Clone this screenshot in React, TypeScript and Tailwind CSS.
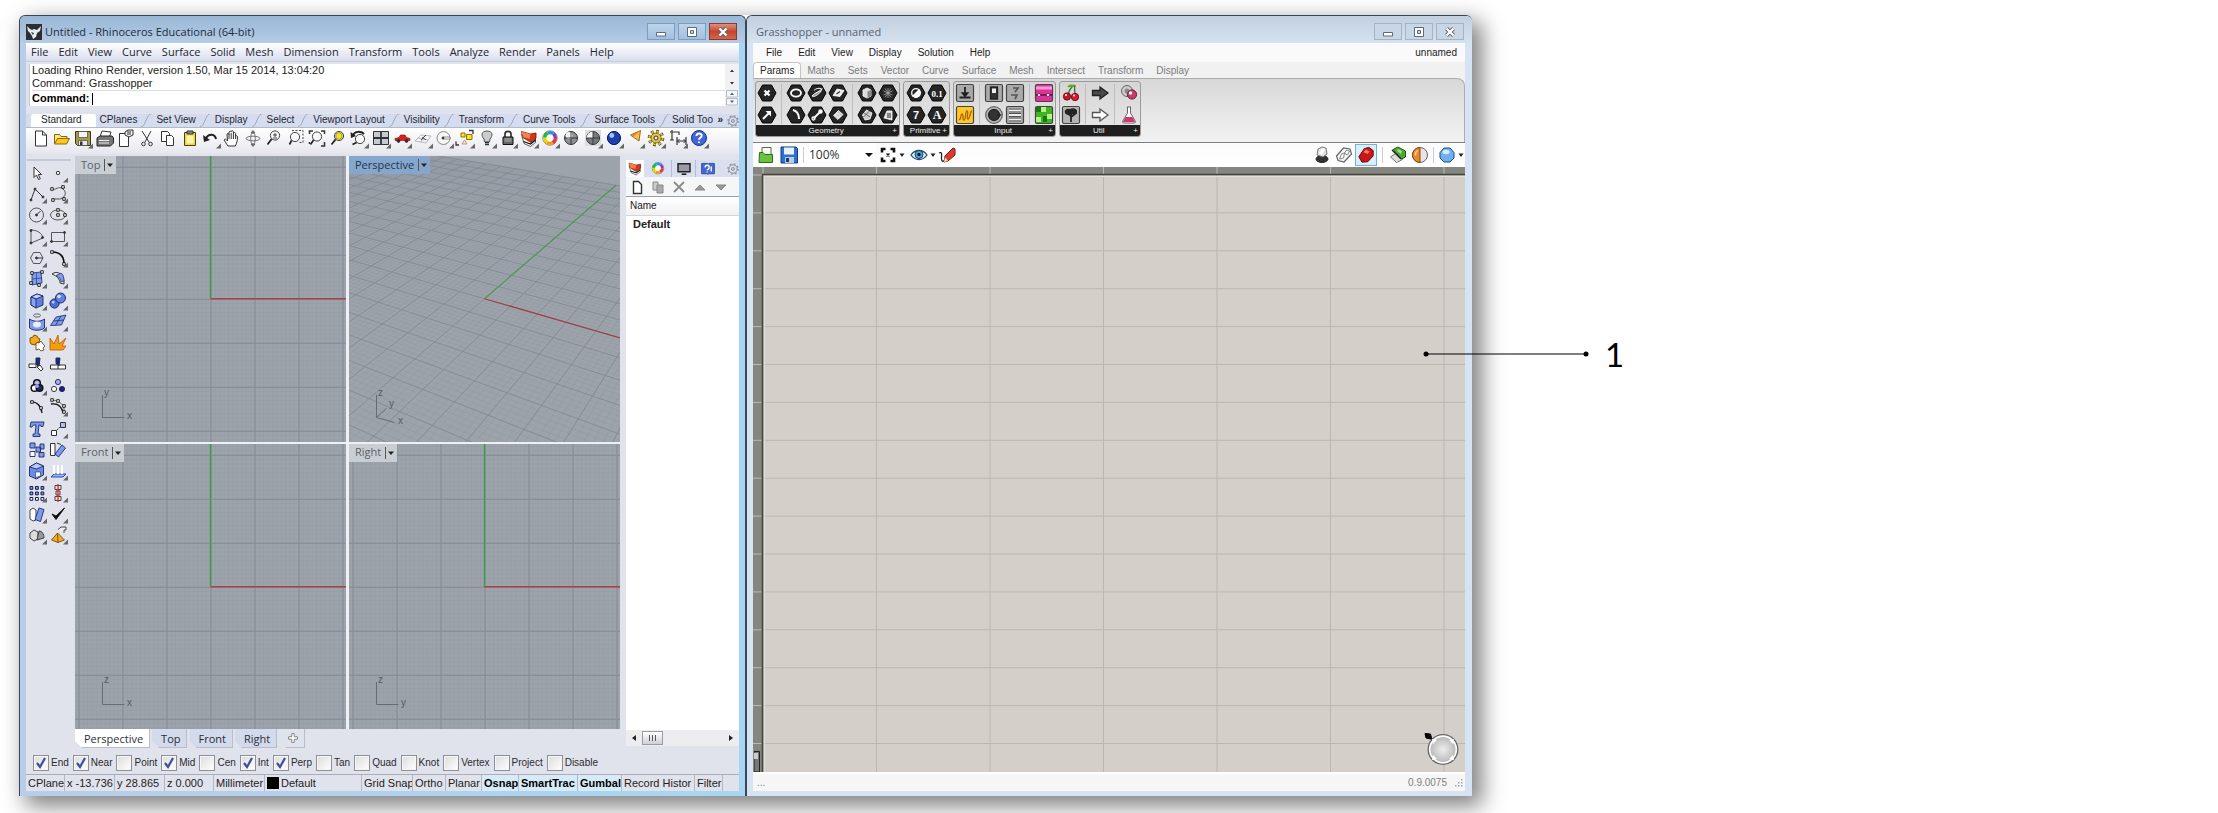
import React, { ReactNode } from "react";

const UI = "font-['Open_Sans','Noto_Sans',sans-serif]";
const ARIAL = "font-['Liberation_Sans',Arial,sans-serif]";

/* ---------- shared icon pieces ---------- */

function Glyph({ children, fly, label }: { children: ReactNode; fly?: boolean; label: string }) {
  return (
    <button type="button" aria-label={label} className="flex size-5 shrink-0 items-center justify-center">
      <svg viewBox="0 0 20 20" className="size-5 overflow-visible" fill="none" stroke="#333" strokeWidth="1">
        {children}
        {fly && <path d="M20 14.500v5h-5z" fill="#666" stroke="none" />}
      </svg>
    </button>
  );
}

const WHEEL = ["#e33", "#f90", "#dd0", "#2b3", "#29d", "#83c"];
function Wheel({ r = 5.3 }: { r?: number }) {
  const seg = (2 * Math.PI * r) / 6;
  return (
    <g>
      <circle cx="10" cy="9" r={r + 1.9} stroke="#555" strokeWidth="0.7" fill="#fff" />
      {WHEEL.map((c, i) => (
        <circle key={c} cx="10" cy="9" r={r} stroke={c} strokeWidth="3.2" strokeDasharray={`${seg} ${seg * 5}`} strokeDashoffset={-seg * i} />
      ))}
    </g>
  );
}

function Layers() {
  return (
    <g strokeWidth="0.8">
      <path d="M2.500 5.500l2.500 9 6.500 3 5-4V6l-5 5z" fill="#fff" stroke="#333" />
      <path d="M2.500 2.500l9 2.500 5.500-1v5l-5 4.500-8-5z" fill="#d93418" stroke="#6b1408" />
      <path d="M2.500 2.500l9 2.500-1 5-6.500-2z" fill="#f5804a" stroke="none" />
      <path d="M4.500 12.500l7 2.500 5-4" stroke="#111" strokeWidth="1.300" />
    </g>
  );
}

function Gear({ stroke = "#8a8d95" }: { stroke?: string }) {
  return (
    <svg viewBox="0 0 20 20" className="size-3 shrink-0" fill="none" stroke={stroke} strokeWidth="1.6">
      <circle cx="10" cy="10" r="7" />
      <circle cx="10" cy="10" r="8.6" strokeWidth="2" strokeDasharray="3 3.75" />
      <circle cx="10" cy="10" r="2.4" />
    </svg>
  );
}

/* ---------- standard toolbar ---------- */

const lens = (x: number, y: number, fill = "#f8f8f8") => (
  <g>
    <circle cx={x} cy={y} r="4.6" fill={fill} stroke="#444" />
    <path d={`M${x - 3.4} ${y + 3.4}L3.5 15.5`} stroke="#222" strokeWidth="1.7" />
  </g>
);

const toolbar: [string, boolean, ReactNode][] = [
  ["New", false, <path d="M4.500 2h7l4 4v11h-11zM11.500 2v4h4" fill="#fff" />],
  ["Open", false, <g><path d="M2.500 14.500v-9h5l1.500 2h6v3" fill="#ffe680" stroke="#8a6a00" /><path d="M2.500 15l3-5.500h12L14.500 15z" fill="#ffc61a" stroke="#8a6a00" /></g>],
  ["Save", true, <g><path d="M2.500 2.500h15v14h-13l-2-2z" fill="#a79a48" stroke="#3a3617" /><path d="M5.500 2.500h9v6h-9z" fill="#f3f4f8" strokeWidth=".6" /><path d="M5.500 11.500h9v5h-9z" fill="#e9e9ee" strokeWidth=".6" /><path d="M7 12.500h2.500v3.500H7z" fill="#333" stroke="none" /></g>],
  ["Print", false, <g><path d="M5 8l2-6 9 1-2 6z" fill="#fff" /><path d="M2 9l3-2h12l1.500 2v5l-3 3H2z" fill="#777" stroke="#222" /><path d="M4 11.500h10M4 14h10" stroke="#eee" /></g>],
  ["Properties", false, <g><path d="M3.500 4.500h9v13h-9z" fill="#fff" /><path d="M9 3l3-2h5v5l-4 2-4-2z" fill="#eee" /><path d="M11 3h4M11 5h4" /></g>],
  ["Cut", false, <g><path d="M5 2l7 11M14 2L8 13" /><circle cx="6.500" cy="15" r="1.800" /><circle cx="13.500" cy="15" r="1.800" /></g>],
  ["Copy", false, <g><path d="M3.500 2.500h6l2 2v8h-8z" fill="#fff" /><path d="M8.500 6.500h5l2 2v8h-7z" fill="#fff" /></g>],
  ["Paste", false, <g><path d="M4.500 3.500h11v13h-11z" fill="#e8d44d" stroke="#4b4310" /><path d="M7 2h6v3H7z" fill="#888" /><path d="M6.500 6.500h7v8h-7z" fill="#fff4a8" stroke="none" /></g>],
  ["Undo", true, <g><path d="M5 9c3-5 9-4 10 1" stroke="#222" strokeWidth="2" /><path d="M2 6l1 7 6-2z" fill="#222" stroke="none" /></g>],
  ["Pan", false, <path d="M6 17l-4-6c1-1.500 2-1 3.500 1L5 5c1-1 2-.500 2 1V3c.800-1.200 2-1 2.200 0v-.700c.800-1 2-.800 2.200.700V4c1-1 2-.500 2.200.500V7c1-.600 2-.200 2 1-.100 4-1 6-2.200 9zM7 6v4M9.200 4v6M11.400 4v6M13.600 6v4" fill="#fff" />],
  ["Rotate", false, <g stroke="#666" strokeWidth=".9"><ellipse cx="10" cy="9.500" rx="7" ry="2.300" /><ellipse cx="10" cy="9.500" rx="2.300" ry="6" /><path d="M8 4l2-2.500L12 4zM8 15l2 2.500 2-2.500z" fill="#666" /></g>],
  ["Zoom", false, <g>{lens(11, 6.5)}<path d="M9 6h4M11 4v4M9 9h4" strokeWidth=".9" /></g>],
  ["Zoom window", false, <g>{lens(9, 8)}<path d="M6 1.500h11v12h-4" strokeDasharray="2 1.500" strokeWidth=".9" /></g>],
  ["Zoom extents", false, <g>{lens(10, 7.5)}<path d="M2.500 5V2H6M14 2h3.500v3M17.500 13v4H14M2.500 13v2" strokeWidth="1.500" /></g>],
  ["Zoom selected", false, <g>{lens(11, 7, "#d9d9d9")}<circle cx="11" cy="7" r="3.200" fill="#f6e21c" stroke="#887a00" strokeWidth=".6" /></g>],
  ["Undo view", true, <g>{lens(11, 10)}<path d="M4 6c2-4 8-4 11-1" stroke="#222" strokeWidth="2" /><path d="M1.500 3l.500 6 5-2z" fill="#222" stroke="none" /></g>],
  ["Four views", true, <g><path d="M2.500 2.500h15v13h-15z" fill="#c5cad2" /><path d="M10 2.500v13M2.500 9h15" strokeWidth="1.800" /></g>],
  ["Set view", true, <g><path d="M3 9.500l4-1L8.500 6H13l1.500 2.500 3.500 1v2H3z" fill="#d91f1f" stroke="#7d0d0d" strokeWidth=".6" /><circle cx="6.500" cy="12" r="1.400" fill="#222" /><circle cx="14.500" cy="12" r="1.400" fill="#222" /></g>],
  ["CPlane", true, <g stroke="#aaa" strokeWidth=".8"><path d="M2 12l6-6 10 1-5 7zM5 9l10 2M8 13l4-7" /><path d="M8 11l5-5M9 8l4 3" stroke="#333" /></g>],
  ["Object snap", true, <g><circle cx="9.500" cy="9" r="6.500" stroke="#888" fill="#f6f6f6" /><path d="M9 8h7v2H9z" stroke="#666" strokeWidth=".7" fill="#fff" /><circle cx="9" cy="9" r="1" fill="#333" /></g>],
  ["Select", true, <g><path d="M6 4h4v4H6zM11.500 5.500H17v5h-5.500z" fill="#ffe02a" stroke="#8a7300" /><path d="M7 15l2.500-4 2.500 4z" fill="#ffe4c8" stroke="#b9835a" strokeWidth=".8" /><path d="M14 1.500h4V5M1 12.500V16h3" strokeWidth="1.300" /></g>],
  ["Hide", true, <g><path d="M10 2c6 0 6 5 3 8l-.500 3h-5L7 10C4 7 4 2 10 2z" fill="#c9cbd0" stroke="#555" /><path d="M8 13.500h4M8 15.500h4" strokeWidth="1.600" /></g>],
  ["Lock", true, <g><path d="M7 8V5c0-3.500 6-3.500 6 0v3" strokeWidth="1.700" /><path d="M5 8h10v7.500H5z" fill="#666" stroke="#111" /><path d="M6.500 10h7M6.500 12h7" stroke="#ccc" strokeWidth=".8" /></g>],
  ["Layers", true, <Layers />],
  ["Color", true, <Wheel />],
  ["Shade", false, <g><circle cx="10" cy="9" r="6.500" fill="#8d8f93" stroke="#333" /><circle cx="8" cy="6.500" r="3.400" fill="#f2f2f2" stroke="none" /><path d="M3.500 9h13M10 2.500v13" strokeWidth=".9" /></g>],
  ["Render shade", true, <g><path d="M2 1h16v16H2z" fill="#dcdcde" stroke="none" /><circle cx="10" cy="9" r="6.500" fill="#77797d" stroke="#333" /><path d="M10 2.500A6.500 6.500 0 0 0 3.500 9H10z" fill="#f2f2f2" stroke="none" /><path d="M3.500 9h13M10 2.500v13" strokeWidth=".9" /></g>],
  ["Render", true, <g><circle cx="10" cy="9" r="6.600" fill="#1c3fae" stroke="#0c1d5e" /><circle cx="7.800" cy="6.500" r="2.400" fill="#a9c4ff" stroke="none" /></g>],
  ["Spotlight", true, <g><path d="M5.500 6L15.500 1.500 14 12z" fill="#f6c04e" stroke="#7b4c07" strokeWidth=".8" /><path d="M5.500 6l10-4.500L9 7z" fill="#e6792c" stroke="none" /></g>],
  ["Options", true, <g><circle cx="10" cy="9" r="6.600" stroke="#4c3d00" strokeWidth="3.400" strokeDasharray="2.600 2.580" /><circle cx="10" cy="9" r="6.600" stroke="#e8c84a" strokeWidth="2" strokeDasharray="2 3.180" strokeDashoffset="-.3" /><circle cx="10" cy="9" r="5" fill="#e8c84a" stroke="#6b5600" strokeWidth=".8" /><circle cx="10" cy="9" r="2" fill="#f3f3f3" /></g>],
  ["Dimension", true, <g><path d="M4 1v10M2 3h3M4 3h7v3M9 8v8M18 8v8M9 12h9M2 11h4" strokeWidth="1.200" /><path d="M11.500 10l-2 2 2 2M15.500 10l2 2-2 2" /></g>],
  ["Help", true, <g><circle cx="10" cy="9" r="7.500" fill="#4166d8" stroke="#1c2f8a" /><path d="M7.500 7c0-3.500 5.300-3.300 5.200-.200 0 2-2.700 2-2.700 4M10 12.500v1.600" stroke="#fff" strokeWidth="1.900" /></g>],
];

/* ---------- side toolbar ---------- */

const B = "#7e9bec";
const D = "#1d2a6b";
const knob = (x: number, y: number) => <path d={`M${x - 1.3} ${y - 1.3}h2.6v2.6h-2.6z`} fill="#fff" stroke="#111" strokeWidth=".9" />;

const side: [string, boolean, ReactNode][] = [
  ["Pointer", false, <path d="M7 4v10.500l2.500-2.500 2 4.500 1.800-.800-2-4.200h3.200z" fill="#fff" />],
  ["Point", true, <circle cx="10" cy="10" r="1.700" fill="#fff" />],
  ["Polyline", true, <g><path d="M4 16L8 5l8 8" /><circle cx="4" cy="16" r="1" fill="#333" /><circle cx="8" cy="5" r="1" fill="#333" /><circle cx="16" cy="13" r="1" fill="#333" /></g>],
  ["Curve", true, <g><path d="M4 5c4 2 6-4 11 0s1 10-4 10H5" stroke="#555" />{knob(4, 5)}{knob(15, 3)}{knob(5, 16)}{knob(16, 15)}</g>],
  ["Circle", true, <g><circle cx="9.500" cy="10" r="7" stroke="#555" /><path d="M9.500 10l4-4" /><circle cx="9.500" cy="10" r="1" fill="#333" /></g>],
  ["Ellipse", true, <g><ellipse cx="10" cy="10" rx="7.500" ry="5" stroke="#555" />{knob(10, 5)}{knob(10, 10)}{knob(17, 10)}</g>],
  ["Arc", true, <g><path d="M4 3v13l12-5C15 6 10 3 4 3z" stroke="#555" /><circle cx="4" cy="3.500" r="1" fill="#333" /><circle cx="4" cy="16" r="1" fill="#333" /><circle cx="15.500" cy="10.500" r="1" fill="#333" /></g>],
  ["Rectangle", true, <g><path d="M3.500 5.500h13v9h-13z" stroke="#555" /><circle cx="3.500" cy="14.500" r="1" fill="#333" /><circle cx="16.500" cy="5.500" r="1" fill="#333" /></g>],
  ["Polygon", true, <g><path d="M6.500 4.500h6.500l3 5.500-3 5.500H6.500L3.500 10z" stroke="#555" /><path d="M9 10h7" /><circle cx="9.500" cy="10" r="1" fill="#333" /></g>],
  ["Fillet", true, <g><path d="M4 4c8 0 12 4 12 12" strokeWidth="1.700" stroke="#111" />{knob(4, 4)}{knob(16, 16)}</g>],
  ["Surface", true, <g><path d="M5 4l9-1 1 11-10 2z" fill={B} stroke={D} strokeWidth=".8" /><path d="M9.500 3.500v12M5 10l10-1" stroke={D} strokeWidth=".6" />{knob(5, 4)}{knob(15, 3)}{knob(4, 14)}{knob(12, 16)}</g>],
  ["Surface edge", true, <g><path d="M4 5c5-4 13 0 12 10l-4-1c0-4-3-7-8-9z" fill="#f4f4f4" /><path d="M8 6.500c3 1 5 4 5 6.500l3-1c0-4-1-7-3-8z" fill={B} stroke={D} strokeWidth=".7" /></g>],
  ["Box", true, <g stroke={D} strokeWidth=".9"><path d="M4 6l6-3 6 2v9l-7 3-5-3z" fill="#5f80e0" /><path d="M4 6l6-3 6 2-7 3z" fill="#c5d3ff" /><path d="M4 6l5 2v9l-5-3z" fill="#89a4f2" /></g>],
  ["Boolean", true, <g stroke={D}><circle cx="6.500" cy="12.500" r="4.600" fill="#4d6fd4" /><circle cx="12.500" cy="7" r="5" fill="#5f82e4" /><circle cx="11" cy="5.500" r="1.800" fill="#dbe5ff" stroke="none" /><circle cx="5.200" cy="11.200" r="1.300" fill="#c5d3ff" stroke="none" /></g>],
  ["Loft", true, <g stroke={D} strokeWidth=".9"><ellipse cx="10" cy="3.500" rx="3.500" ry="1.600" stroke="#555" /><path d="M2.500 7c4 3 11 3 15 0v9c-4 3-11 3-15 0z" fill={B} /><ellipse cx="10" cy="12.500" rx="4" ry="3" fill="#e9eeff" stroke="none" /></g>],
  ["Mesh", true, <g stroke={D} strokeWidth=".8"><path d="M2.500 13.500L8 5l10-2-4.500 10z" fill={B} /><path d="M5.500 9l10.500-1M7.500 13.500L13 4" /></g>],
  ["Join", false, <g stroke="#5c3a00" strokeWidth=".8"><path d="M9 9l3 1 2-2 2 3 2 2-2 2 1 2-3 1-2-2-3 1V13z" fill="#fff" /><path d="M3 5l3-1 1-2 3 1 1 2 2 1-1 3-3 1-1 2-4-1-1-2z" fill="#f5a81c" /></g>],
  ["Explode", false, <path d="M2 17L2 5l4 6 4-9 1 9 7-6-4 8 4 0-3 4z" fill="#f59b12" stroke="#b35c00" strokeWidth=".8" />],
  ["Trim", false, <g><path d="M9 3h4l-1 9-3-3z" fill={D} stroke={D} /><path d="M2 9h7v3.500H2zM10 12l4 4 2-2-3-4z" fill="#fff" /></g>],
  ["Split", false, <g><path d="M2.500 10h15v4h-15z" fill="#fff" /><path d="M8 3h4l-1 8-3-2.500z" fill={D} stroke={D} /><path d="M10 11v3" /></g>],
  ["Group", true, <g stroke="#111" strokeWidth="1.500"><circle cx="10" cy="7" r="3.300" fill="#b9bde8" /><circle cx="7.500" cy="12" r="3.300" fill="#fff" /><circle cx="12.500" cy="12" r="3.300" fill={D} /><circle cx="10" cy="10" r="2" fill="#9aa0df" stroke="none" /></g>],
  ["Ungroup", false, <g stroke="#223" strokeWidth=".9"><circle cx="10" cy="6" r="2.600" fill="#a9adf0" /><circle cx="6" cy="13" r="2.600" fill="#fff" /><circle cx="14" cy="13" r="2.600" fill="#1c1c9c" /></g>],
  ["Edit points", false, <g><path d="M3 5c7-1 11 4 12 11" strokeWidth="1.300" stroke="#111" />{knob(5, 5)}{knob(14, 11)}</g>],
  ["Control points", true, <g><path d="M3 7c8-1 11 3 12 9" strokeWidth="1.300" stroke="#111" /><path d="M4 3l6 1 6 5v6" strokeWidth=".7" />{knob(4, 3)}{knob(10, 4)}{knob(16, 9)}{knob(16, 15)}</g>],
  ["Text", false, <path d="M4 3h13l-1 4.500h-2L13.500 6H12l-1 9h2v2.500H6V15h2l1-9H6.500L5 8H3z" fill={B} stroke={D} strokeWidth=".9" />],
  ["Dimension", true, <g><path d="M3.500 11.500h5v5h-5z" fill="#fff" /><path d="M12.500 3.500h5v5h-5z" fill="#aebdf5" /><path d="M9 11l3-3" strokeDasharray="2 1" /></g>],
  ["Transform", false, <g stroke={D} strokeWidth=".9"><path d="M3 3h5v5H3zM9 7h4.500v5H9zM13 4h4v5h-4zM12 12.500h5v4.500h-5z" fill={B} /><path d="M3 11.500h5v5H3z" fill="#fff" /></g>],
  ["Orient", false, <g><path d="M2.500 3.500H7v12H2.500z" fill="#fff" /><path d="M7 14l7-9 3.500 3-7 9z" fill={B} stroke={D} strokeWidth=".9" /><path d="M9 3l4 1.500" /></g>],
  ["Solid edit", true, <g stroke={D} strokeWidth=".9"><path d="M2.500 6l7-4 7 3v9l-7 4-7-3z" fill="#6c8be6" /><path d="M2.500 6l7-4 7 3-7 3z" fill="#b9c9ff" /><path d="M8.500 11h5v4l-5 1.500z" fill="#fff" strokeWidth=".6" /></g>],
  ["Array surface", true, <g><path d="M3 16l3-3h12l-3 3z" fill="#9db4ff" stroke="#2c4aad" /><path d="M6 4v9M10 4v9M14 4v9" stroke="#fff" strokeWidth="2" /></g>],
  ["Array", true, <g stroke="#111a4a" strokeWidth="1">{[3, 8.5, 14].map((x) => [3.5, 9, 14.5].map((y) => <path key={`${x}-${y}`} d={`M${x} ${y}h2.8v2.8h-2.8z`} fill={y > 14 ? "#fff" : "#8ba2f0"} />))}</g>],
  ["Gumball", true, <g strokeWidth=".9"><path d="M7 2.500h6v4H7zM7 13.500h6v4H7zM8 8h4v4H8z" fill="#f7dede" /><path d="M10 1v18" stroke="#d22" strokeWidth="1.300" /></g>],
  ["Unroll", true, <g strokeWidth=".9"><path d="M3 6l3-2 3 2v10l-3 1-3-2z" fill="#fff" /><path d="M8 15.500L12 4l5 1.500-3.500 12z" fill={B} stroke={D} /></g>],
  ["Check", true, <path d="M4 10l4 5.500L16.500 4 8 12z" fill="#111" stroke="#111" />],
  ["Boolean solids", true, <g strokeWidth=".9"><path d="M3 8l4-3 4 2v7l-4 2-4-3z" fill="#ddd" /><path d="M10 15l2-9c3 0 5 3 5 7z" fill="#999" /></g>],
  ["Paint", true, <g strokeWidth=".9"><path d="M3.500 15l6-7 7 7-6.500 2.500z" fill="#f1ac23" stroke="#7a4d00" /><path d="M9.500 8l.500 9.500" stroke="#7a4d00" /><path d="M10 4.500L13 2h5v3h-2v3" fill="#eee" /></g>],
];

/* ---------- viewports ---------- */

function AxisMark({ up, right }: { up: string; right: string }) {
  return (
    <svg viewBox="0 0 40 40" className={`absolute bottom-4 left-5 size-10 ${ARIAL}`} fill="none" stroke="#666c75">
      <path d="M7.500 9v22.500h22" />
      <g fill="#555b64" stroke="none" fontSize="10">
        <text x="9" y="10">{up}</text>
        <text x="32" y="33">{right}</text>
      </g>
    </svg>
  );
}

function ViewTitle({ name, active }: { name: string; active?: boolean }) {
  return (
    <button
      type="button"
      className={`absolute left-0 top-0 flex h-[18px] items-center gap-1 pl-1.5 pr-0.5 text-[11px] ${UI} ${active ? "bg-[#84a7cb] text-[#1f3550]" : "bg-[#c9ced4] text-[#5c6168]"}`}
    >
      <span>{name}</span>
      <svg viewBox="0 0 10 14" className="h-3.5 w-2.5">
        <path d="M.5 1v12" stroke="#555" />
        <path d="M3 5.500h6L6 9z" fill="#222" />
      </svg>
    </button>
  );
}

function FlatView({ name, up, right }: { name: string; up: string; right: string }) {
  return (
    <section aria-label={name} className="relative min-h-0 min-w-0 overflow-hidden bg-[#9da3ab]">
      <svg className="absolute inset-0 size-full" fill="none">
        <defs>
          <pattern id={`minor-${name}`} width="4.400" height="4.400" patternUnits="userSpaceOnUse">
            <path d="M0 0H4.400M0 0V4.400" stroke="#9197a0" strokeWidth=".7" />
          </pattern>
          <pattern id={`major-${name}`} width="44" height="44" patternUnits="userSpaceOnUse">
            <path d="M0 .500H44M.500 0V44" stroke="#858b94" />
          </pattern>
        </defs>
        <svg x="50%" y="50%" className="overflow-visible">
          <rect x="-1012" y="-1012" width="2024" height="2024" fill={`url(#minor-${name})`} />
          <rect x="-1012" y="-1012" width="2024" height="2024" fill={`url(#major-${name})`} />
          <path d="M0 0V-1000" stroke="#3f9b48" strokeWidth="1.500" />
          <path d="M0 0H1000" stroke="#a8414c" strokeWidth="1.500" />
        </svg>
      </svg>
      <ViewTitle name={name} />
      <AxisMark up={up} right={right} />
    </section>
  );
}

/* Two-point perspective: image of ground point (x, y), origin at the centre of the view. */
function project(x: number, y: number): string {
  const a = 0.0231;
  const b = 0.04;
  const w = 1 - a * x + b * y;
  const px = (a * x * 1095 + b * y * 366) / w;
  const py = (a * x * 316 - b * y * 316) / w;
  return `${px.toFixed(1)} ${py.toFixed(1)}`;
}

function gridPath(step: number): string {
  const N = 14;
  let d = "";
  for (let i = -N; i <= N + 0.001; i += step) {
    d += `M${project(i, -N)}L${project(i, N)}M${project(-N, i)}L${project(N, i)}`;
  }
  return d;
}

function PerspectiveView() {
  return (
    <section aria-label="Perspective" className="relative min-h-0 min-w-0 overflow-hidden bg-[#9da3ab]">
      <svg className="absolute inset-0 size-full" fill="none">
        <svg x="50%" y="50%" className="overflow-visible">
          <path d={gridPath(0.2)} stroke="#8c929b" strokeWidth=".3" />
          <path d={gridPath(1)} stroke="#838992" strokeWidth=".8" />
          <path d={`M0 0L${project(0, 14)}`} stroke="#4f9a56" strokeWidth="1.300" />
          <path d={`M0 0L${project(14, 0)}`} stroke="#a0404c" strokeWidth="1.300" />
        </svg>
      </svg>
      <ViewTitle name="Perspective" active />
      <svg viewBox="0 0 40 40" className={`absolute bottom-4 left-5 size-10 ${ARIAL}`} fill="none" stroke="#666c75">
        <path d="M7.500 9v22.500l18 5M7.500 31.500l10-9" />
        <g fill="#555b64" stroke="none" fontSize="10">
          <text x="9" y="10">z</text>
          <text x="20" y="21">y</text>
          <text x="29" y="38">x</text>
        </g>
      </svg>
    </section>
  );
}

/* ---------- window chrome ---------- */

function WindowButtons({ active }: { active?: boolean }) {
  const base = "flex h-[17px] w-7 items-center justify-center border";
  const cool = active ? "border-[#7d9cbe] bg-linear-to-b from-[#bdd3ea] to-[#a3bfde]" : "border-[#a3b4c8] bg-[#c8d6e6]";
  const hot = active ? "border-[#8a3a34] bg-linear-to-b from-[#dc8f80] via-[#c8432c] to-[#d4664a]" : cool;
  return (
    <div className="flex gap-[3px]">
      <button type="button" aria-label="Minimize" className={`${base} ${cool}`}>
        <svg viewBox="0 0 12 12" className="size-3"><path d="M1.500 6.500h9v3.500h-9z" fill="#fff" stroke="#5d6a7c" /></svg>
      </button>
      <button type="button" aria-label="Maximize" className={`${base} ${cool}`}>
        <svg viewBox="0 0 12 12" className="size-3" stroke="#5d6a7c"><path d="M1.500 1.500h9v9h-9z" fill="#fff" /><path d="M4.500 4.500h3v3h-3z" fill="#c3d3e6" /></svg>
      </button>
      <button type="button" aria-label="Close" className={`${base} ${hot}`}>
        <svg viewBox="0 0 12 12" className="size-3">
          <path d="M2.500 2.500l7 7M9.500 2.500l-7 7" stroke="#5d5f70" strokeWidth="4" />
          <path d="M2.500 2.500l7 7M9.500 2.500l-7 7" stroke="#fff" strokeWidth="2.400" />
        </svg>
      </button>
    </div>
  );
}

function Osnap({ label, on }: { label: string; on?: boolean }) {
  return (
    <label className="flex items-center gap-0.5">
      <span className="relative size-4">
        <input type="checkbox" defaultChecked={on} className="peer block size-4 appearance-none border border-[#8d9096] bg-linear-to-br from-[#dcdcde] to-white shadow-[inset_0_0_0_1px_#f6f6f6]" />
        <svg viewBox="0 0 16 16" className="pointer-events-none absolute inset-0 hidden size-4 peer-checked:block" fill="none">
          <path d="M4 8l3 4 5-9" stroke="#3d4f9d" strokeWidth="2.200" />
        </svg>
      </span>
      {label}
    </label>
  );
}

const rhinoMenus = ["File", "Edit", "View", "Curve", "Surface", "Solid", "Mesh", "Dimension", "Transform", "Tools", "Analyze", "Render", "Panels", "Help"];
const rhinoTabs = ["CPlanes", "Set View", "Display", "Select", "Viewport Layout", "Visibility", "Transform", "Curve Tools", "Surface Tools"];
const osnaps: [string, boolean][] = [
  ["End", true], ["Near", true], ["Point", false], ["Mid", true], ["Cen", false], ["Int", true], ["Perp", true],
  ["Tan", false], ["Quad", false], ["Knot", false], ["Vertex", false], ["Project", false], ["Disable", false],
];

const cell = "h-full shrink-0 overflow-hidden whitespace-nowrap border-r border-[#b4b8c2] pl-0.5 text-left";
const viewTab = "border-b border-r border-[#b8bdc9] pl-[9px] pr-1.5 [clip-path:polygon(0_0,100%_0,100%_100%,7px_100%,0_12px)]";

function Slant() {
  return (
    <svg viewBox="0 0 11 14" className="h-3.5 w-[11px] shrink-0" fill="none">
      <path d="M0 14C5 13 5 1 11 .5V14z" fill="#d6dcef" />
      <path d="M0 14C5 13 5 1 11 .5" stroke="#9fa6b8" />
    </svg>
  );
}

function LayerPanel() {
  return (
    <aside className={`mb-1 mt-1 flex w-[113px] shrink-0 flex-col bg-white text-[11px] text-[#222] ${ARIAL}`}>
      <div className="flex h-[17px] items-center bg-[#d9dfef]">
        <button type="button" aria-label="Layers" className="flex h-full w-[18px] items-center justify-center bg-white">
          <svg viewBox="0 0 20 20" className="size-4" fill="none"><Layers /></svg>
        </button>
        <button type="button" aria-label="Colors" className="flex h-full w-7 items-center justify-center border-r border-[#b5bccd]">
          <svg viewBox="0 0 20 20" className="size-4" fill="none"><Wheel /></svg>
        </button>
        <button type="button" aria-label="Display" className="flex h-full w-6 items-center justify-center border-r border-[#b5bccd]">
          <svg viewBox="0 0 20 20" className="size-4"><path d="M2.500 3.500h15v10h-15z" fill="#99a" stroke="#222" strokeWidth="1.800" /><path d="M7 16.500h6" stroke="#222" strokeWidth="2" /></svg>
        </button>
        <button type="button" aria-label="Help" className="flex h-full w-6 items-center justify-center">
          <svg viewBox="0 0 20 20" className="size-4" fill="none"><path d="M2 3h7l1 1 1-1h7v13h-7l-1 1-1-1H2z" fill="#4468cf" stroke="#263f93" /><path d="M6.500 8c0-3.500 5-3.500 5 0s-2.500 1.500-2.500 3.500M9 13v1.500M14 7v6" stroke="#fff" strokeWidth="1.700" /></svg>
        </button>
        <span className="ml-auto"><Gear /></span>
      </div>
      <div className="flex h-5 items-center gap-px border-b border-[#9b9ea6] bg-[#f5f6f8] pl-px">
        <Glyph label="New layer"><path d="M6.500 4.500h5l3 3v9h-8z" fill="#fff" strokeWidth="1.400" /></Glyph>
        <Glyph label="Copy layer"><path d="M5 5h5v8H5z" fill="#ccc" stroke="#888" /><path d="M9 8h6v8H9z" fill="#aaa" stroke="#888" /></Glyph>
        <Glyph label="Delete layer"><path d="M5 5l10 10M15 5L5 15" stroke="#8a8a8a" strokeWidth="1.800" /></Glyph>
        <Glyph label="Move up"><path d="M5 13l5-5 5 5z" fill="#999" stroke="#888" /></Glyph>
        <Glyph label="Move down"><path d="M5 8l5 5 5-5z" fill="#999" stroke="#888" /></Glyph>
      </div>
      <table className="w-full border-collapse text-left">
        <thead>
          <tr><th className="h-[18px] border-b border-[#d5d5d8] bg-linear-to-b from-white to-[#f1f1f3] py-0 pl-1 text-[10px] font-normal">Name</th></tr>
        </thead>
        <tbody>
          <tr><td className="h-4 py-0 pl-[7px] font-bold">Default</td></tr>
        </tbody>
      </table>
      <div className="mt-auto flex h-4 items-center justify-between bg-[#ededef] px-1">
        <svg viewBox="0 0 8 8" className="size-2"><path d="M6 1v6L2 4z" fill="#222" /></svg>
        <span className="ml-1 flex h-3.5 w-[21px] items-center justify-center gap-0.5 border border-[#9a9ca1] bg-linear-to-b from-white to-[#cfd0d3]">
          <i className="h-1.5 w-px bg-[#555]" /><i className="h-1.5 w-px bg-[#555]" /><i className="h-1.5 w-px bg-[#555]" />
        </span>
        <svg viewBox="0 0 8 8" className="ml-auto size-2"><path d="M2 1v6l4-3z" fill="#222" /></svg>
      </div>
    </aside>
  );
}

function Rhino() {
  return (
    <section className="flex min-w-0 flex-col rounded-t-md border-x border-t border-[#3a4653] bg-linear-to-r from-[#b7cdea] to-[#a6d6f3] px-1.5 pb-[5px]">
      <header className="-mx-1.5 flex h-[27px] shrink-0 items-end justify-between rounded-t-md bg-linear-to-b from-[#9ab8d6] to-[#b4cbe6] pb-[3px] pl-1.5 pr-2">
        <div className="flex items-center gap-[3px]">
          <svg viewBox="0 0 16 16" className="size-4"><path d="M0 0h16v16H0z" fill="#2b2f33" /><path d="M1 2l3 3 2 1 2-1 3 1 4-4-1 5-3 2-1 4-3 2-1-3-2-3-2-2z" fill="#e8ecef" /><path d="M5 8l3 1-1 2z" fill="#2b2f33" /></svg>
          <h1 className={`whitespace-nowrap text-[11px] leading-4 text-[#1f2c3b] ${UI}`}>Untitled - Rhinoceros Educational (64-bit)</h1>
        </div>
        <WindowButtons active />
      </header>
      <div className="flex min-h-0 flex-1 flex-col bg-[#e1e3ec]">
        <nav className={`flex h-[19px] shrink-0 items-center gap-2.5 border-b border-[#c9cedd] bg-linear-to-b from-white to-[#d9deef] pl-[5px] text-[11px] text-[#22262e] ${UI}`}>
          {rhinoMenus.map((m) => <button type="button" key={m}>{m}</button>)}
        </nav>
        <div className={`ml-[3px] mt-0.5 flex shrink-0 border-l border-[#c8c8cd] bg-white pl-0.5 text-[11px] leading-[13px] text-[#222] ${ARIAL}`}>
          <div className="min-w-0 flex-1">
            <p>Loading Rhino Render, version 1.50, Mar 15 2014, 13:04:20</p>
            <p>Command: Grasshopper</p>
            <div className="flex h-4 items-center border-t border-[#ddd]">
              <label htmlFor="command" className="font-bold text-black">Command:</label>
              <i className="ml-[3px] h-3 w-px bg-black" />
              <input id="command" className="min-w-0 flex-1 outline-none" />
            </div>
          </div>
          <div className="flex w-3.5 flex-col justify-between bg-[#f1f1f3]">
            <svg viewBox="0 0 14 26" className="h-[26px] w-3.5" fill="#333"><path d="M5 8h4L7 5.500zM5 18h4l-2 2.500z" /></svg>
            <svg viewBox="0 0 14 16" className="h-4 w-3.5" fill="#4a5a9c"><path d="M1.500.500h11v6.500h-11zM1.500 8.500h11V15h-11z" fill="#f6f7fb" stroke="#b5bac8" /><path d="M5 5h4L7 2.500zM5 10.500h4L7 13z" /></svg>
          </div>
        </div>
        <div className={`mt-2 flex h-3.5 shrink-0 items-end overflow-hidden border-b border-[#b2b9ca] bg-[#d6dcef] pl-[5px] text-[10px] leading-[14px] text-[#23262e] ${ARIAL}`}>
          <button type="button" className="h-3.5 rounded-t bg-white pl-2.5 pr-3.5">Standard</button>
          {rhinoTabs.map((t) => (
            <span key={t} className="flex whitespace-nowrap">
              <button type="button" className="px-1">{t}</button>
              <Slant />
            </span>
          ))}
          <button type="button" className="min-w-0 flex-1 overflow-hidden whitespace-nowrap pl-0.5 text-left">Solid Too</button>
          <span className="px-1 font-bold">»</span>
          <Gear />
        </div>
        <div className="flex h-[26px] shrink-0 items-center justify-between bg-linear-to-b from-white to-[#e6e7ee] pb-1 pl-[5px] pr-[30px]">
          {toolbar.map(([label, fly, art]) => <Glyph key={label} label={label} fly={fly}>{art}</Glyph>)}
        </div>
        <div className="mt-0.5 flex min-h-0 flex-1">
          <div className="w-[49px] shrink-0 pl-px pr-1 pt-[3px]">
            <div className="mb-px border-t-2 border-[#c3c8d4]" />
            <div className="grid h-96 auto-rows-fr grid-cols-[21px_21px] items-center">
              {side.map(([label, fly, art]) => <Glyph key={label} label={label} fly={fly}>{art}</Glyph>)}
            </div>
          </div>
          <div className="mr-1.5 flex min-w-0 flex-1 flex-col">
            <div className="grid min-h-0 flex-1 grid-cols-2 grid-rows-2 gap-x-[3px] gap-y-0.5 bg-[#eef0f5]">
              <FlatView name="Top" up="y" right="x" />
              <PerspectiveView />
              <FlatView name="Front" up="z" right="x" />
              <FlatView name="Right" up="z" right="y" />
            </div>
            <div className={`mb-0.5 flex h-[19px] shrink-0 gap-0.5 text-[11px] leading-[19px] text-[#2b2e36] ${UI}`}>
              <button type="button" className={`${viewTab} bg-white`}>Perspective</button>
              {["Top", "Front", "Right"].map((v) => (
                <button type="button" key={v} className={`${viewTab} bg-[#d3daec]`}>{v}</button>
              ))}
              <button type="button" aria-label="New viewport" className={`${viewTab} bg-[#dfe3ed]`}>
                <svg viewBox="0 0 8 8" className="size-2.5" fill="#fff" stroke="#777" strokeWidth=".7"><path d="M3 .500h2V3h2.500v2H5v2.500H3V5H.500V3H3z" /></svg>
              </button>
            </div>
          </div>
          <LayerPanel />
        </div>
        <div className={`flex h-6 shrink-0 items-center gap-1 pl-[7px] pt-px text-[10px] text-[#2a2a2e] ${ARIAL}`}>
          {osnaps.map(([l, on]) => <Osnap key={l} label={l} on={on} />)}
        </div>
        <footer className={`flex h-[17px] shrink-0 overflow-hidden border-t border-[#a9aeb9] text-[11px] leading-4 text-[#222] ${ARIAL}`}>
          <button type="button" className={`${cell} w-[39px]`}>CPlane</button>
          <span className={`${cell} w-[50px]`}>x -13.736</span>
          <span className={`${cell} w-[50px]`}>y 28.865</span>
          <span className={`${cell} w-[49px] text-center`}>z 0.000</span>
          <span className={`${cell} w-[51px]`}>Millimeter</span>
          <button type="button" className={`${cell} flex min-w-0 flex-1 items-center gap-0.5`}><i className="size-3 bg-black" />Default</button>
          <button type="button" className={`${cell} w-[51px]`}>Grid Snap</button>
          <button type="button" className={`${cell} w-[33px]`}>Ortho</button>
          <button type="button" className={`${cell} w-9`}>Planar</button>
          <button type="button" className={`${cell} w-[37px] bg-[#d6ebf7] font-bold text-black`}>Osnap</button>
          <button type="button" className={`${cell} w-[59px] bg-[#d6ebf7] font-bold text-black`}>SmartTrac</button>
          <button type="button" className={`${cell} w-11 bg-[#d6ebf7] font-bold text-black`}>Gumbal</button>
          <button type="button" className={`${cell} w-[73px]`}>Record Histor</button>
          <button type="button" className={`${cell} mr-4 w-7`}>Filter</button>
        </footer>
      </div>
    </section>
  );
}

/* ---------- Grasshopper ribbon ---------- */

function Hex({ label, children }: { label: string; children: ReactNode }) {
  return (
    <button type="button" aria-label={label} className="size-5">
      <svg viewBox="0 0 20 20" className="size-5" fill="none" stroke="#fff" strokeWidth="1.300">
        <path d="M5.500 2h9L19 10l-4.500 8h-9L1 10z" fill="#252525" stroke="#000" strokeWidth="1" />
        {children}
      </svg>
    </button>
  );
}

function Tile({ label, fill, children }: { label: string; fill?: string; children: ReactNode }) {
  return (
    <button type="button" aria-label={label} className="size-5">
      <svg viewBox="0 0 20 20" className="size-5" fill="none" stroke="#222" strokeWidth="1.300">
        {fill && <rect x="1.500" y="1.500" width="17" height="17" rx="1.500" fill={fill} stroke="#444" strokeWidth="1.200" />}
        {children}
      </svg>
    </button>
  );
}

function Group({ name, children }: { name: string; children: ReactNode }) {
  return (
    <div className="flex flex-col overflow-hidden rounded-[3px] border border-[#9b9b9b] bg-linear-to-b from-[#d6d6d6] to-[#e8e8e8]">
      <div className="flex flex-1 items-center px-px">{children}</div>
      <div className="flex h-[11px] items-center bg-[#1f1f1f] pl-1 pr-0.5 text-[8px] leading-[10px] text-[#eee]">
        <span className="flex-1 text-center">{name}</span>
        <button type="button" aria-label={`More ${name}`}>+</button>
      </div>
    </div>
  );
}

const Col = ({ children }: { children: ReactNode }) => <div className="flex flex-col gap-0.5">{children}</div>;
const Rule = () => <i className="mx-1 h-10 w-px bg-[#bdbdbd]" />;

function Ribbon() {
  return (
    <div className="flex h-16 shrink-0 gap-[3px] rounded-tr-lg border-r border-t border-[#adadad] bg-linear-to-b from-[#d8d8d8] to-[#f2f2f2] pb-[5px] pl-0.5 pt-0.5">
      <Group name="Geometry">
        <Col>
          <Hex label="Point"><path d="M7.500 7.500l5 5M12.500 7.500l-5 5" strokeWidth="2.200" /></Hex>
          <Hex label="Vector"><path d="M6 14l6-6" strokeWidth="2" /><path d="M8.500 6h5.500v5.500z" fill="#fff" stroke="none" /></Hex>
        </Col>
        <Rule />
        <div className="grid grid-cols-3 gap-x-px gap-y-0.5">
          <Hex label="Circle"><ellipse cx="10" cy="10" rx="5" ry="3.600" strokeWidth="1.900" /></Hex>
          <Hex label="Circular arc"><path d="M5 13c1 2 9-2 10-7.500-2 3.500-7 3.500-10 7.500z" fill="#999" strokeWidth="1" /><path d="M7 7.500c2-2 4-2.500 7-2" strokeWidth="1" /></Hex>
          <Hex label="Plane"><path d="M5 12.500l4-6.500 7 1.500-4 6z" fill="#eee" stroke="#fff" strokeWidth=".8" /><path d="M8.500 11l3.500-2.500" stroke="#333" /></Hex>
          <Hex label="Curve"><path d="M7 5c4 1 6 5 6 9" strokeWidth="2" /></Hex>
          <Hex label="Line"><path d="M6.500 13.500l7-7" strokeWidth="1.800" /><circle cx="6.500" cy="13.500" r="1.500" /><circle cx="13.500" cy="6.500" r="1.600" fill="#fff" /></Hex>
          <Hex label="Rectangle"><path d="M5.500 10.500l5-5 4.500 4-5 5zM9.500 8l3 3-2 2-3-3z" fill="#ccc" strokeWidth=".8" /></Hex>
        </div>
        <Rule />
        <div className="grid grid-cols-2 gap-x-px gap-y-0.5">
          <Hex label="Brep"><path d="M6 7l4-2 4 2v6l-4 2-4-2z" fill="#ddd" strokeWidth=".8" /><path d="M10.500 8.500L14 7v6l-3.500 1.800z" fill="#888" stroke="none" /></Hex>
          <Hex label="Mesh"><path d="M10 5v10M5.500 8l9 4M5.500 12l9-4M7 5.500l6 9M13 5.500l-6 9" strokeWidth=".8" stroke="#aaa" /></Hex>
          <Hex label="Twisted box"><path d="M5.500 10l4-5 5.500 3-2 6-5 1z" fill="#ccc" strokeWidth=".8" /><path d="M7 8l6 4M6.500 12l6-6" stroke="#555" strokeWidth=".8" /></Hex>
          <Hex label="Geometry"><path d="M6 13l3-7h5v9z" fill="#ddd" strokeWidth=".8" /><path d="M10 8v5M12 8v5" stroke="#555" /></Hex>
        </div>
      </Group>
      <Group name="Primitive">
        <div className="grid grid-cols-2 gap-x-px gap-y-0.5 px-px">
          <Hex label="Boolean"><circle cx="10" cy="10" r="4.300" /><path d="M13 7a4.300 4.300 0 0 1-6 6z" fill="#fff" /></Hex>
          <Hex label="Number"><text x="10" y="13.500" textAnchor="middle" fontSize="9" fontWeight="bold" fill="#fff" stroke="none" className="font-['Liberation_Serif',serif]">0.1</text></Hex>
          <Hex label="Integer"><text x="10" y="14" textAnchor="middle" fontSize="11" fontWeight="bold" fill="#fff" stroke="none">7</text></Hex>
          <Hex label="Text"><text x="10" y="14" textAnchor="middle" fontSize="12" fontWeight="bold" fill="#fff" stroke="none" className="font-['Liberation_Serif',serif]">A</text></Hex>
        </div>
      </Group>
      <Group name="Input">
        <Col>
          <Tile label="Number slider" fill="#aaa"><path d="M10 4v8M4.500 14.500h11" strokeWidth="1.800" /><path d="M7 10h6l-3 3.500z" fill="#222" /></Tile>
          <Tile label="Graph" fill="#ffc928"><path d="M4 15c3-1 1-6 3-6s0 6 2 6 1-9 3-9-1 8 1 8 2-8 4-8" stroke="#b36400" strokeWidth="1.300" /></Tile>
        </Col>
        <Rule />
        <div className="grid grid-cols-2 gap-x-px gap-y-0.5">
          <Tile label="Toggle" fill="#aaa"><path d="M6.500 4h7v12h-7z" fill="#333" /><path d="M8 5.500h4V10H8z" fill="#eee" stroke="none" /></Tile>
          <Tile label="Digit scroller" fill="#aaa"><path d="M8 5h5l-3 4M6 12h6l-2 4" stroke="#555" strokeWidth="1.700" /></Tile>
          <Tile label="Knob"><circle cx="10" cy="10" r="8.300" fill="#b9b9b9" stroke="#666" /><circle cx="10" cy="10" r="5.500" fill="#333" /><path d="M14 8l4 2-4 2z" fill="#222" stroke="none" /></Tile>
          <Tile label="Value list" fill="#aaa"><path d="M4 5.500h12M4 10h12M4 14.500h12" stroke="#333" strokeWidth="3.400" /><path d="M4 5.500h12M4 10h12M4 14.500h12" stroke="#eee" strokeWidth="1.800" /></Tile>
        </div>
        <Rule />
        <Col>
          <Tile label="Gradient" fill="#e0319a"><path d="M2 5h16" stroke="#ff9ed4" strokeWidth="3" /><path d="M2 12h16" stroke="#6d0545" /><circle cx="5" cy="12" r="1.500" fill="#fff" strokeWidth=".6" /><circle cx="14" cy="12" r="1.500" fill="#fff" strokeWidth=".6" /></Tile>
          <Tile label="Image sampler" fill="#3fb526"><path d="M7 2h5v5H7zM2 12h5v5H2zM13 9h5v5h-5z" fill="#b6f28a" stroke="none" /><path d="M2 2h5v5H2zM9 11h4v6H9z" fill="#167a0c" stroke="none" /></Tile>
        </Col>
      </Group>
      <Group name="Util">
        <Col>
          <Tile label="Cherry picker"><path d="M7 12C8 7 10 4 14 2M14 12c0-4-1-7 0-10" stroke="#3a6a1c" /><path d="M6 3.500c2-2.500 5-2.500 8-1.500-2 2.500-5 3-8 1.500z" fill="#4eb52a" stroke="none" /><circle cx="6" cy="13.500" r="3.700" fill="#c9152a" stroke="#5d0611" strokeWidth=".8" /><circle cx="14" cy="14" r="3.700" fill="#d91b30" stroke="#5d0611" strokeWidth=".8" /><circle cx="5" cy="12" r="1" fill="#fff" stroke="none" /><circle cx="13" cy="12.500" r="1" fill="#fff" stroke="none" /></Tile>
          <Tile label="Param viewer" fill="#b5b5b5"><path d="M10 17V9M10 12l4-3M10 11L6 8" strokeWidth="1.800" /><path d="M4 8c-1-3 2-5 5-4 3-2 8 0 7 3 1 3-3 3-6 2-3 1-5 1-6-1z" fill="#222" stroke="none" /></Tile>
        </Col>
        <Rule />
        <Col>
          <Tile label="Data dam"><path d="M2.500 7.500H10V4l8 6-8 6v-3.500H2.500z" fill="#4a4a4a" /></Tile>
          <Tile label="Data output"><path d="M2.500 7.500H10V4l8 6-8 6v-3.500H2.500z" fill="#fff" stroke="#555" /></Tile>
        </Col>
        <Rule />
        <Col>
          <Tile label="Cluster"><circle cx="8" cy="8" r="5.500" fill="#ccc" stroke="#666" strokeWidth="1" /><circle cx="8" cy="8" r="2.500" fill="#888" stroke="none" /><circle cx="13" cy="11.500" r="4.600" fill="#c93a6b" stroke="#701a38" strokeWidth="1" /><circle cx="11.500" cy="10" r="1.700" fill="#fff" stroke="none" /></Tile>
          <Tile label="Experiment"><path d="M8 2h4M8.500 2v6l-5 8.500q0 1.500 1.500 1.500h10q1.500 0 1.500-1.500L11.500 8V2" fill="#fff" stroke="#666" strokeWidth="1" /><path d="M6.500 12h7l2.500 5H4z" fill="#d8326f" stroke="none" /></Tile>
        </Col>
      </Group>
    </div>
  );
}

function Caret() {
  return <svg viewBox="0 0 8 8" className="size-2 shrink-0"><path d="M1.500 2.500h5L4 6z" fill="#222" /></svg>;
}

const ghTabs = ["Maths", "Sets", "Vector", "Curve", "Surface", "Mesh", "Intersect", "Transform", "Display"];

function GhToolbar() {
  return (
    <div className="flex h-[25px] shrink-0 items-center border-t border-[#7d7f80] bg-linear-to-b from-[#fbfbfb] to-white pl-[3px]">
      <Glyph label="Open file"><path d="M6 2.500h9V10H6z" fill="#f7fff4" stroke="#4d6b45" /><path d="M3 17.500l.500-10H7l2 2h7.500v8z" fill="#6bc23f" stroke="#2e6b16" /></Glyph>
      <span className="w-[3px]" />
      <Glyph label="Save file"><path d="M2 2h15l1.500 1.500V18H2z" fill="#2e6fd0" stroke="#123a82" /><path d="M5 2.500h10v7H5z" fill="#e8f0fb" stroke="none" /><path d="M6 12h9v6H6z" fill="#bcd" stroke="none" /><path d="M7 13h3v4H7z" fill="#123a82" stroke="none" /></Glyph>
      <i className="mx-1 h-4 w-px bg-[#ccc]" />
      <label className="relative flex h-full w-[68px] items-center bg-white">
        <select aria-label="Zoom" className={`h-5 w-full appearance-none bg-white pl-px text-[12px] text-[#333] ${UI}`} defaultValue="100%">
          <option>100%</option>
          <option>50%</option>
        </select>
        <svg viewBox="0 0 8 8" className="pointer-events-none absolute right-[3px] size-2"><path d="M0 2h8L4 6z" fill="#111" /></svg>
      </label>
      <span className="w-0.5" />
      <Glyph label="Zoom extents"><path d="M4 7.500V4h3.500M12.500 4H16v3.500M16 12.500V16h-3.500M7.500 16H4v-3.500" stroke="#111" strokeWidth="2.600" /><path d="M8.500 8.500l3 3M11.500 8.500l-3 3" stroke="#111" strokeWidth="1.400" /></Glyph>
      <Caret />
      <span className="w-[3px]" />
      <Glyph label="Named views"><path d="M2 10c4-6 12-6 16 0-4 6-12 6-16 0z" fill="#e9f3fa" stroke="#1e4c72" strokeWidth="1.300" /><circle cx="10" cy="9.500" r="4" fill="#4aa5dc" stroke="#163e60" /><circle cx="10" cy="9.500" r="1.700" fill="#111" stroke="none" /></Glyph>
      <Caret />
      <Glyph label="Sketch"><path d="M2 8c5-2 1 5 3 8 2 1 3-1 4-2" stroke="#222" strokeWidth="1.300" /><path d="M7 17l1-6 8-8 2 1v6l-7 6z" fill="#dc3a30" stroke="#7d1610" /><path d="M7 17l1-5 3 4z" fill="#f2dcb8" stroke="none" /></Glyph>
      <span className="ml-auto" />
      <Glyph label="No preview"><ellipse cx="10" cy="14" rx="6" ry="3.500" fill="#333" stroke="#222" /><path d="M5 10l1-6 4-2 4 1 1 6-4 3z" fill="#e2e2e2" stroke="#777" /><path d="M7 8l4-5 2 1-3 6z" fill="#fff" stroke="none" /></Glyph>
      <span className="w-0.5" />
      <Glyph label="Wireframe preview"><path d="M2.500 11l7-8 6.500 1 1.500 5-7.500 8-6-1.500z" fill="#f5f5f5" stroke="#666" strokeWidth="1.200" /><path d="M5.500 14l2-5 3-1-1 5zM10.500 8l2-3 3 1-2 4z" fill="#fff" stroke="#888" /></Glyph>
      <span className="w-px" />
      <button type="button" aria-label="Shaded preview" className="flex h-[22px] w-[22px] items-center justify-center border border-[#6db1ea] bg-[#dceefb]">
        <svg viewBox="0 0 20 20" className="size-[18px]"><path d="M2 12l6-9 5-1.500 5 3.500v6l-6 6.500-6.500.500z" fill="#c91616" stroke="#5b0505" /><path d="M7 7l3-3 4 2-2 3z" fill="#f17a6a" /></svg>
      </button>
      <i className="mx-[5px] h-4 w-px bg-[#ccc]" />
      <Glyph label="Selected preview"><path d="M2.500 12l6 5.500 6-3-7-6z" fill="#ddd" stroke="#777" /><path d="M5 4.500L10 2l7.500 4v6l-4 2z" fill="#4da532" stroke="#245c12" /><path d="M10 4l4 2-1 3-4-3z" fill="#a5dc85" stroke="none" /><path d="M4 5l9 9" stroke="#222" strokeWidth="1.300" /></Glyph>
      <span className="w-0.5" />
      <Glyph label="Document preview"><circle cx="10" cy="10" r="7.500" fill="#e6e6e6" stroke="#666" /><path d="M10 2.500a7.500 7.500 0 0 0 0 15z" fill="#e8882a" stroke="#8a4608" /><path d="M7.500 5.500a5 5 0 0 0-2 5" stroke="#fbd7a8" strokeWidth="1.500" /></Glyph>
      <i className="mx-[3px] h-4 w-px bg-[#ccc]" />
      <Glyph label="Mesh quality"><path d="M7 3h6l4 4.500V13l-4 4H7l-4-4V7.500z" fill="#6db1ee" stroke="#1c4b82" /><ellipse cx="9" cy="7" rx="3.500" ry="2.200" fill="#d3e9fd" stroke="none" /></Glyph>
      <Caret />
    </div>
  );
}

function GhCanvas() {
  return (
    <div className="relative min-h-0 flex-1 overflow-hidden bg-[#d4cfc8]">
      <svg className="absolute inset-0 size-full" fill="none">
        <defs>
          <pattern id="gh-grid" x="9.500" y="7.500" width="113.500" height="37.900" patternUnits="userSpaceOnUse">
            <path d="M0 .500H113.500M.500 0V37.900" stroke="#bcb8b1" />
          </pattern>
        </defs>
        <path d="M0 0H3000V7H9V2000H0z" fill="#85867f" />
        <rect width="100%" height="100%" fill="url(#gh-grid)" />
        <path d="M3000 7.500H9.500V2000" stroke="#43433f" strokeWidth="1.500" />
        <path d="M3000 9.500H11.500V2000" stroke="#e2ded8" />
      </svg>
      <svg viewBox="0 0 6 21" className="absolute bottom-0 left-px h-[21px] w-1.5"><path d="M0 .5h5.500V21H0z" fill="#777" stroke="#222" /><path d="M0 2h4v6H0z" fill="#ccc" /></svg>
      <svg viewBox="0 0 40 40" className="absolute bottom-1 right-1 size-10" fill="none">
        <defs>
          <radialGradient id="compass"><stop offset="0" stopColor="#eee" /><stop offset="1" stopColor="#bbb" /></radialGradient>
        </defs>
        <path d="M4 5.500l5.500.500 1 4 3 3-4-2-4.500-1z" fill="#000" stroke="#000" />
        <circle cx="22" cy="21.500" r="14.800" fill="#fff" stroke="#666" strokeWidth="1.300" />
        <circle cx="22" cy="21.500" r="12.500" fill="url(#compass)" />
        <path d="M11 11l5 1-4 4zM33 11l-5 1 4 4zM11 32l5-1-4-4zM33 32l-5-1 4-4z" fill="#fff" />
      </svg>
    </div>
  );
}

function Grasshopper() {
  return (
    <section className={`flex min-w-0 flex-col rounded-t-md border-l border-t border-[#3a4653] bg-[#d6e3f2] pb-[5px] pl-1.5 pr-[7px] ${ARIAL}`}>
      <header className="-ml-1.5 -mr-[7px] flex h-[27px] shrink-0 items-end justify-between rounded-t-md bg-linear-to-b from-[#c1cfdf] to-[#d6e2f0] pb-[3px] pl-[9px] pr-2">
        <h1 className={`whitespace-nowrap text-[11px] leading-4 text-[#5a636f] ${UI}`}>Grasshopper - unnamed</h1>
        <WindowButtons />
      </header>
      <div className="flex min-h-0 flex-1 flex-col bg-[#f1f1f2]">
        <nav className="flex h-[19px] shrink-0 items-center gap-4 bg-[#fafafb] pl-[13px] pr-2 text-[10px] text-[#1c1c1c]">
          {["File", "Edit", "View", "Display", "Solution", "Help"].map((m) => <button type="button" key={m}>{m}</button>)}
          <span className="ml-auto">unnamed</span>
        </nav>
        <div className="flex h-4 shrink-0 items-center gap-[13px] text-[10px] text-[#7b7b7b]">
          <button type="button" className="-mr-[7px] h-4 rounded-t border border-b-0 border-[#c3c3c3] bg-white px-1.5 text-[#222]">Params</button>
          {ghTabs.map((t) => <button type="button" key={t}>{t}</button>)}
        </div>
        <Ribbon />
        <GhToolbar />
        <GhCanvas />
        <footer className="flex h-[19px] shrink-0 items-center justify-between border-t-2 border-white bg-[#f6f6f7] pl-1 pr-0.5 text-[10px] text-[#808080]">
          <span>...</span>
          <span className="flex items-center gap-2">
            0.9.0075
            <svg viewBox="0 0 8 8" className="size-2" fill="#a3a3a3"><path d="M6 0h1.500v1.500H6zM6 3h1.500v1.500H6zM6 6h1.500v1.500H6zM3 3h1.500v1.500H3zM3 6h1.500v1.500H3zM0 6h1.500v1.500H0z" /></svg>
          </span>
        </footer>
      </div>
    </section>
  );
}

export default function App() {
  return (
    <main className="grid min-h-screen grid-cols-[1453fr_746fr] overflow-hidden bg-white pb-[17px] pl-[19px] pt-[15px]">
      <div className="grid min-w-0 grid-cols-[727fr_726fr] rounded-t-md shadow-[8px_8px_22px_2px_rgba(0,0,0,0.5)]">
        <Rhino />
        <Grasshopper />
      </div>
      <div className="relative">
        <div className="absolute -left-[49px] top-[319px] flex items-center gap-4">
          <svg viewBox="0 0 166 8" className="h-2 w-[166px]" fill="#000">
            <path d="M3 3.500h160v1H3z" />
            <circle cx="3" cy="4" r="2.500" />
            <circle cx="163" cy="4" r="2.500" />
          </svg>
          <span className="font-[Lato,sans-serif] text-[33px] leading-10 text-black">1</span>
        </div>
      </div>
    </main>
  );
}
